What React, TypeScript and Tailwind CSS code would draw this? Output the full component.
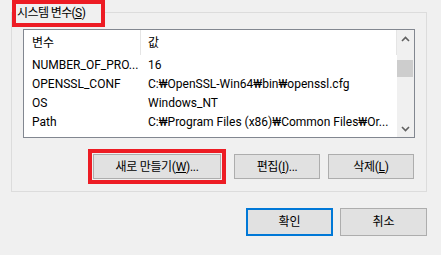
import React from 'react';

const rows: [string, string][] = [
  ['NUMBER_OF_PRO...', '16'],
  ['OPENSSL_CONF', 'C:₩OpenSSL-Win64₩bin₩openssl.cfg'],
  ['OS', 'Windows_NT'],
  ['Path', 'C:₩Program Files (x86)₩Common Files₩Or...'],
];

const Chevron: React.FC<{ down?: boolean }> = ({ down }) => (
  <svg width="9" height="6" viewBox="0 0 9 6" className={down ? 'rotate-180' : ''}>
    <path d="M1 5 L4.5 1.5 L8 5" fill="none" stroke="#606060" strokeWidth="1.6" />
  </svg>
);

const Key: React.FC<{ k: string }> = ({ k }) => <span className="underline">{k}</span>;

const App: React.FC = () => {
  return (
    <div className="w-[441px] h-[255px] bg-[#f0f0f0] overflow-hidden text-[12px] text-black font-['Roboto','Noto_Sans_CJK_KR',sans-serif]">
      {/* group box */}
      <div className="relative ml-[11px] mt-[12px] w-[416px] h-[180px] border border-[#dcdcdc]">
        <div className="absolute left-0 -top-[13px] h-[27px] w-[93px] border-4 border-[#ed1c24] bg-[#f0f0f0] pl-px leading-[19px] tracking-[-0.6px]">
          시스템 변수(<Key k="S" />)
        </div>

        <div className="ml-[11px] mt-[16px] w-[392px] h-[109px] border border-[#828790] bg-white flex">
          <div className="flex-1 flex flex-col">
            <div className="h-[25px] flex items-center">
              <div className="w-[117px] h-full border-r border-[#e5e5e5] pl-[8px] flex items-center">변수</div>
              <div className="flex-1 h-full border-r border-[#e5e5e5] pl-[7px] flex items-center">값</div>
            </div>
            {rows.map(([name, value]) => (
              <div key={name} className="h-[19px] flex items-center whitespace-nowrap">
                <div className="w-[117px] pl-[8px]">{name}</div>
                <div className="pl-[7px]">{value}</div>
              </div>
            ))}
          </div>
          <div className="w-[17px] bg-[#f0f0f0] flex flex-col">
            <div className="h-[17px] flex items-center justify-center">
              <Chevron />
            </div>
            <div className="flex-1">
              <div className="mt-[13px] w-[16px] h-[17px] bg-[#cdcdcd]" />
            </div>
            <div className="h-[17px] flex items-center justify-center">
              <Chevron down />
            </div>
          </div>
        </div>

        <div className="mt-[11px] pr-[12px] flex justify-end items-center gap-[8px]">
          <div className="border-4 border-[#ed1c24] p-px">
            <button className="w-[128px] h-[25px] bg-[#e1e1e1] border border-[#adadad] tracking-[-0.3px]">
              새로 만들기(<Key k="W" />)...
            </button>
          </div>
          <button className="w-[86px] h-[25px] bg-[#e1e1e1] border border-[#adadad] tracking-[-0.3px]">
            편집(<Key k="I" />)...
          </button>
          <button className="w-[86px] h-[25px] bg-[#e1e1e1] border border-[#adadad] tracking-[-0.3px]">
            삭제(<Key k="L" />)
          </button>
        </div>
      </div>

      <div className="mt-[16px] pr-[14px] flex justify-end gap-[7px]">
        <button className="w-[87px] h-[28px] bg-[#e1e1e1] border-2 border-[#0078d7]">확인</button>
        <button className="w-[87px] h-[28px] bg-[#e1e1e1] border border-[#adadad]">취소</button>
      </div>
    </div>
  );
};

export default App;
